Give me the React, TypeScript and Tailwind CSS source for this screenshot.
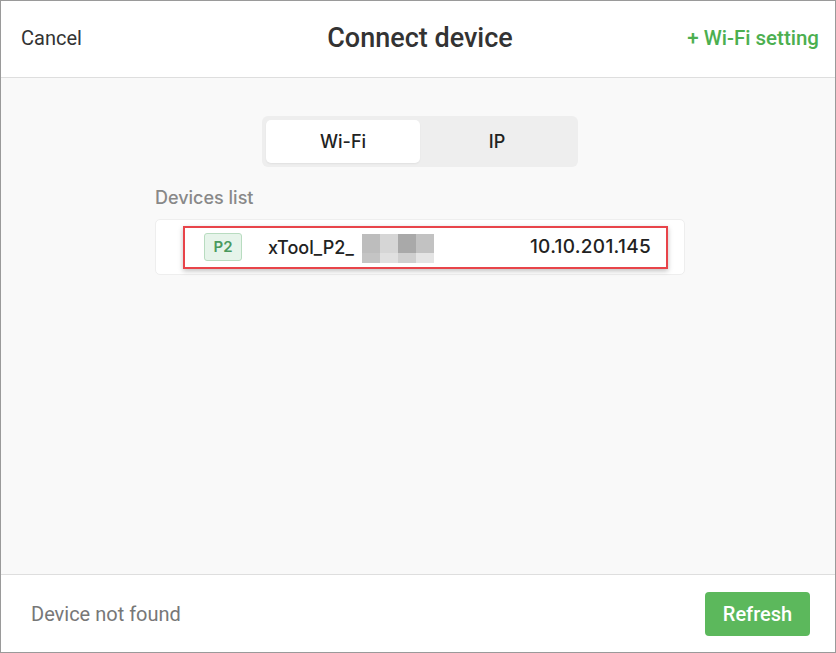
import React, { useState } from 'react';

const blocks = [
    ['bg-[#bdbdbd]', 'bg-[#d6d6d6]', 'bg-[#a9a9a9]', 'bg-[#c2c2c2]'],
    ['bg-[#c4c4c4]', 'bg-[#e0e0e0]', 'bg-[#cfcfcf]', 'bg-[#e4e4e4]'],
];

export default function App() {
    const [tab, setTab] = useState<'wifi' | 'ip'>('wifi');

    return (
        <div className="w-[836px] h-[653px] border border-[#9a9a9a] bg-white flex flex-col font-['Inter',sans-serif] text-[#222]">
            {/* Header */}
            <div className="h-[77px] shrink-0 border-b border-[#dedede] flex items-center justify-between pl-[20px] pr-[16px] pb-[2px]">
                <button className="text-[20px] font-['Roboto',sans-serif] text-[#333] w-[170px] text-left">Cancel</button>
                <h1 className="text-[27px] font-medium font-['Roboto',sans-serif] text-[#333]">Connect device</h1>
                <button className="text-[20.5px] font-medium font-['Roboto',sans-serif] text-[#4caf50] w-[170px] text-right">+ Wi-Fi setting</button>
            </div>

            {/* Body */}
            <div className="flex-grow bg-[#f9f9f9] flex flex-col items-center pt-[38px] pl-[4px]">
                <div className="w-[316px] h-[51px] rounded-[6px] bg-[#eeeeee] p-[4px] flex">
                    <button
                        onClick={() => setTab('wifi')}
                        className={`flex-1 rounded-[5px] text-[18px] font-medium ${tab === 'wifi' ? 'bg-white shadow-[0_1px_2px_rgba(0,0,0,0.06)]' : ''}`}
                    >
                        Wi-Fi
                    </button>
                    <button
                        onClick={() => setTab('ip')}
                        className={`flex-1 rounded-[5px] text-[18px] font-medium ${tab === 'ip' ? 'bg-white' : ''}`}
                    >
                        IP
                    </button>
                </div>

                <div className="w-[530px] mt-[18px]">
                    <div className="text-[18px] text-[#888] font-medium leading-[26px]">Devices list</div>
                    <div className="mt-[8px] h-[56px] bg-white rounded-[5px] border border-[#eeeeee] flex items-center pl-[27px] pr-[16px]">
                        <div className="flex-1 h-[43px] border-2 border-[#e8444a] shadow-[0_2px_5px_rgba(0,0,0,0.25)] flex items-center pl-[19px] pr-[15px]">
                            <span className="w-[38px] h-[28px] rounded-[3px] bg-[#e6f4ea] border border-[#b8dcc0] text-[#4a9a5e] text-[15px] font-semibold flex items-center justify-center">
                                P2
                            </span>
                            <span className="ml-[26px] text-[18px] font-medium text-[#222]">xTool_P2_</span>
                            {/* blurred remainder of the name */}
                            <div className="ml-[8px] flex flex-col self-start mt-[6px]">
                                {blocks.map((row, r) => (
                                    <div key={r} className={`flex ${r === 0 ? 'h-[19px]' : 'h-[10px]'}`}>
                                        {row.map((c, i) => (
                                            <div key={i} className={`${c} w-[18px]`} />
                                        ))}
                                    </div>
                                ))}
                            </div>
                            <span className="ml-auto text-[19px] font-medium tracking-[0.3px] text-[#222]">10.10.201.145</span>
                        </div>
                    </div>
                </div>
            </div>

            {/* Footer */}
            <div className="h-[78px] shrink-0 border-t border-[#dedede] flex items-center justify-between pl-[30px] pr-[25px]">
                <span className="text-[20px] font-['Roboto',sans-serif] text-[#777]">Device not found</span>
                <button className="w-[105px] h-[44px] rounded-[4px] bg-[#5cb85c] text-white text-[20px] font-medium font-['Roboto',sans-serif]">
                    Refresh
                </button>
            </div>
        </div>
    );
}
